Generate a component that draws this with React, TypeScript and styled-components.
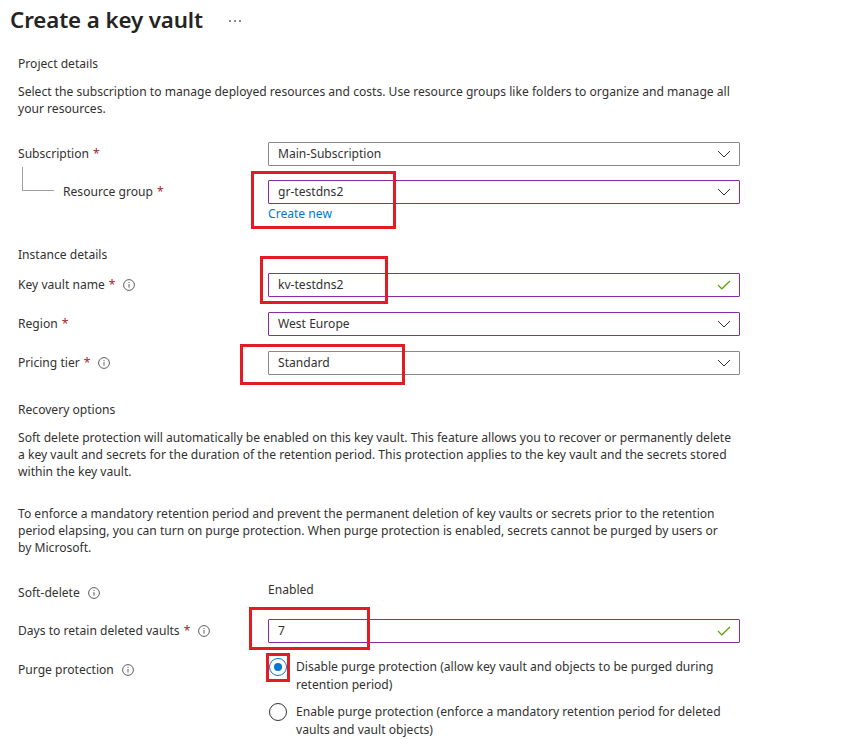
import React from "react";
import styled, { createGlobalStyle } from "styled-components";

const Global = createGlobalStyle`
  html, body { margin: 0; padding: 0; background: #ffffff; }
  body {
    font-family: "Noto Sans", "Open Sans", "Liberation Sans", sans-serif;
    color: #323130;
    -webkit-font-smoothing: antialiased;
  }
  * { box-sizing: border-box; }
`;

const Page = styled.div`
  width: 861px;
  height: 752px;
  overflow: hidden;
  display: flex;
  flex-direction: column;
  background: #fff;
`;

const Header = styled.header`
  height: 59px;
  flex: 0 0 59px;
  display: flex;
  align-items: flex-start;
  padding: 5px 0 0 10px;
  gap: 26px;
`;

const Title = styled.h1`
  margin: 0;
  font-size: 22.3px;
  line-height: 30px;
  font-weight: 600;
  color: #252423;
  letter-spacing: -0.1px;
`;

const More = styled.div`
  display: flex;
  gap: 3px;
  margin-top: 15px;
`;

const Dot = styled.span`
  width: 2px;
  height: 2px;
  background: #8a8886;
  display: block;
`;

const Body = styled.main`
  flex: 1;
  overflow: hidden;
`;

const Scrolled = styled.div`
  margin-top: -4px;
  padding: 0 0 0 18px;
  width: 742px;
  display: flex;
  flex-direction: column;
  font-size: 12.1px;
`;

const SectionTitle = styled.div<{ $mt?: number }>`
  margin-top: ${(p) => p.$mt ?? 0}px;
  line-height: 18px;
  color: #323130;
`;

const Para = styled.p<{ $mt?: number }>`
  margin: ${(p) => p.$mt ?? 0}px 0 0 0;
  width: 715px;
  line-height: 17px;
  color: #323130;
`;

const Row = styled.div<{ $mt?: number }>`
  margin-top: ${(p) => p.$mt ?? 0}px;
  display: grid;
  grid-template-columns: 250px 472px;
  align-items: start;
`;

const Label = styled.div<{ $pt?: number; $tall?: boolean }>`
  display: flex;
  align-items: center;
  min-height: ${(p) => (p.$tall ? 24 : 18)}px;
  padding-top: ${(p) => p.$pt ?? 0}px;
  white-space: nowrap;
`;

const LabelText = styled.span`
  line-height: 18px;
`;

const Req = styled.span`
  color: #a4262c;
  margin-left: 4px;
  line-height: 18px;
`;

const Info = styled.svg`
  margin-left: 8px;
  flex: 0 0 auto;
`;

const Connector = styled.span`
  display: block;
  width: 32px;
  height: 24px;
  margin: -13px 0 0 4px;
  border-left: 1px solid #a19f9d;
  border-bottom: 1px solid #a19f9d;
  align-self: flex-start;
`;

const NestedLabel = styled.span`
  margin-left: 9px;
  line-height: 18px;
`;

const Cell = styled.div`
  position: relative;
  display: flex;
  flex-direction: column;
`;

const Field = styled.div<{ $accent?: boolean }>`
  height: 24px;
  border: 1px solid ${(p) => (p.$accent ? "#8a2da5" : "#8a8886")};
  border-radius: 1px;
  display: flex;
  align-items: center;
  justify-content: space-between;
  padding: 0 8px 0 9px;
  line-height: 22px;
  color: #323130;
  background: #fff;
`;

const Link = styled.a`
  color: #0078d4;
  text-decoration: none;
  line-height: 17px;
  margin-top: 1px;
  align-self: flex-start;
`;

const Plain = styled.div`
  line-height: 18px;
`;

const Annot = styled.span`
  position: absolute;
  border: 3px solid #e31c23;
  pointer-events: none;
`;

const RadioGroup = styled.div`
  display: flex;
  flex-direction: column;
  gap: 9px;
  position: relative;
`;

const RadioRow = styled.label`
  display: flex;
  align-items: flex-start;
  gap: 9px;
  position: relative;
  line-height: 18px;
`;

const RadioCircle = styled.span<{ $on?: boolean }>`
  width: 18px;
  height: 18px;
  flex: 0 0 18px;
  margin-left: 1px;
  border-radius: 50%;
  border: 1px solid ${(p) => (p.$on ? "#0078d4" : "#323130")};
  display: flex;
  align-items: center;
  justify-content: center;
  &::after {
    content: "";
    width: 8px;
    height: 8px;
    border-radius: 50%;
    background: ${(p) => (p.$on ? "#0078d4" : "transparent")};
  }
`;

const RadioText = styled.span`
  width: 440px;
`;

const InfoIcon = () => (
  <Info width="12" height="12" viewBox="0 0 12 12" aria-hidden>
    <circle cx="6" cy="6" r="5.4" fill="none" stroke="#605e5c" strokeWidth="1" />
    <rect x="5.5" y="5" width="1" height="3.6" fill="#605e5c" />
    <rect x="5.5" y="3" width="1" height="1" fill="#605e5c" />
  </Info>
);

const Chevron = () => (
  <svg width="14" height="8" viewBox="0 0 14 8" aria-hidden>
    <path d="M1 1 L7 7 L13 1" fill="none" stroke="#323130" strokeWidth="1" />
  </svg>
);

const Check = () => (
  <svg width="14" height="10" viewBox="0 0 14 10" aria-hidden>
    <path d="M1 5 L4.8 8.8 L13 1" fill="none" stroke="#57a300" strokeWidth="1.2" />
  </svg>
);

export default function App() {
  return (
    <Page>
      <Global />
      <Header>
        <Title>Create a key vault</Title>
        <More>
          <Dot />
          <Dot />
          <Dot />
        </More>
      </Header>
      <Body>
        <Scrolled>
          <SectionTitle>Project details</SectionTitle>
          <Para $mt={10}>
            Select the subscription to manage deployed resources and costs. Use resource groups like folders to organize and manage all your resources.
          </Para>

          <Row $mt={25}>
            <Label $tall>
              <LabelText>Subscription</LabelText>
              <Req>*</Req>
            </Label>
            <Cell>
              <Field>
                <span>Main-Subscription</span>
                <Chevron />
              </Field>
            </Cell>
          </Row>

          <Row $mt={14}>
            <Label $tall>
              <Connector />
              <NestedLabel>Resource group</NestedLabel>
              <Req>*</Req>
            </Label>
            <Cell>
              <Field $accent>
                <span>gr-testdns2</span>
                <Chevron />
              </Field>
              <Link href="#">Create new</Link>
              <Annot style={{ left: -17, top: -9, width: 145, height: 58 }} />
            </Cell>
          </Row>

          <SectionTitle $mt={24}>Instance details</SectionTitle>

          <Row $mt={9}>
            <Label $tall>
              <LabelText>Key vault name</LabelText>
              <Req>*</Req>
              <InfoIcon />
            </Label>
            <Cell>
              <Field $accent>
                <span>kv-testdns2</span>
                <Check />
              </Field>
              <Annot style={{ left: -8, top: -17, width: 128, height: 48 }} />
            </Cell>
          </Row>

          <Row $mt={15}>
            <Label $tall>
              <LabelText>Region</LabelText>
              <Req>*</Req>
            </Label>
            <Cell>
              <Field $accent>
                <span>West Europe</span>
                <Chevron />
              </Field>
            </Cell>
          </Row>

          <Row $mt={15}>
            <Label $tall>
              <LabelText>Pricing tier</LabelText>
              <Req>*</Req>
              <InfoIcon />
            </Label>
            <Cell>
              <Field>
                <span>Standard</span>
                <Chevron />
              </Field>
              <Annot style={{ left: -28, top: -7, width: 165, height: 41 }} />
            </Cell>
          </Row>

          <SectionTitle $mt={26}>Recovery options</SectionTitle>
          <Para $mt={10}>
            Soft delete protection will automatically be enabled on this key vault. This feature allows you to recover or permanently delete a key vault and secrets for the duration of the retention period. This protection applies to the key vault and the secrets stored within the key vault.
          </Para>
          <Para $mt={25}>
            To enforce a mandatory retention period and prevent the permanent deletion of key vaults or secrets prior to the retention period elapsing, you can turn on purge protection. When purge protection is enabled, secrets cannot be purged by users or by Microsoft.
          </Para>

          <Row $mt={25}>
            <Label $pt={3}>
              <LabelText>Soft-delete</LabelText>
              <InfoIcon />
            </Label>
            <Cell>
              <Plain>Enabled</Plain>
            </Cell>
          </Row>

          <Row $mt={17}>
            <Label $tall>
              <LabelText>Days to retain deleted vaults</LabelText>
              <Req>*</Req>
              <InfoIcon />
            </Label>
            <Cell>
              <Field $accent>
                <span>7</span>
                <Check />
              </Field>
              <Annot style={{ left: -19, top: -12, width: 121, height: 43 }} />
            </Cell>
          </Row>

          <Row $mt={15}>
            <Label $pt={3}>
              <LabelText>Purge protection</LabelText>
              <InfoIcon />
            </Label>
            <RadioGroup>
              <RadioRow>
                <RadioCircle $on />
                <RadioText>
                  Disable purge protection (allow key vault and objects to be purged during retention period)
                </RadioText>
                <Annot style={{ left: -2, top: -5, width: 24, height: 29 }} />
              </RadioRow>
              <RadioRow>
                <RadioCircle />
                <RadioText>
                  Enable purge protection (enforce a mandatory retention period for deleted vaults and vault objects)
                </RadioText>
              </RadioRow>
            </RadioGroup>
          </Row>
        </Scrolled>
      </Body>
    </Page>
  );
}
